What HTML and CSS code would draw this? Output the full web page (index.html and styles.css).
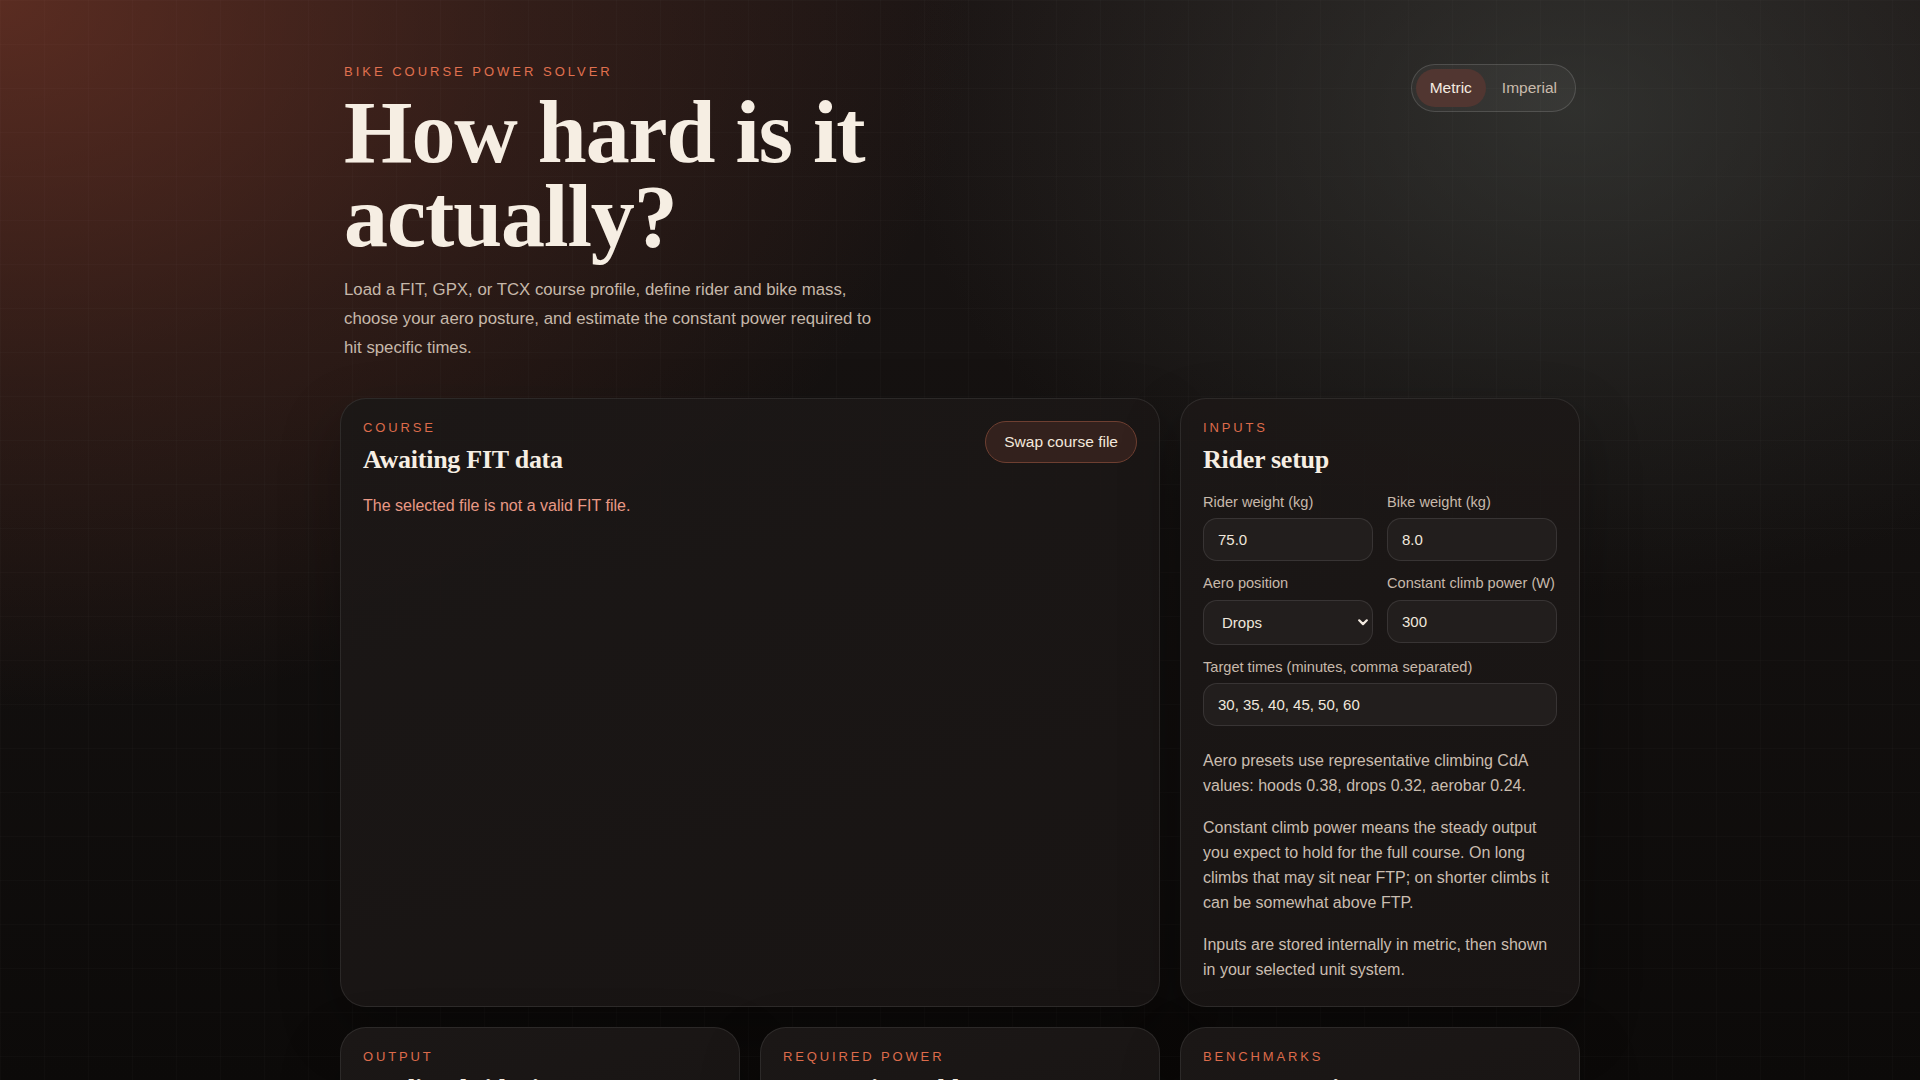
FILE: index.html
```html
<!DOCTYPE html>
<html lang="en">
<head>
<meta charset="utf-8">
<title>Bike Course Power Solver</title>
<link rel="stylesheet" href="styles.css">
</head>
<body>
<main class="page">
  <header class="hero">
    <div class="hero-copy">
      <p class="eyebrow">BIKE COURSE POWER SOLVER</p>
      <h1 class="hero-title">How hard is it actually?</h1>
      <p class="hero-lede">Load a FIT, GPX, or TCX course profile, define rider and bike mass, choose your aero posture, and estimate the constant power required to hit specific times.</p>
    </div>
    <div class="unit-toggle" role="group" aria-label="Units">
      <button class="unit-btn is-active" type="button">Metric</button>
      <button class="unit-btn" type="button">Imperial</button>
    </div>
  </header>

  <section class="grid">
    <article class="card card-course">
      <div class="card-head">
        <div>
          <p class="card-label">COURSE</p>
          <h2 class="card-title">Awaiting FIT data</h2>
        </div>
        <button class="swap-btn" type="button">Swap course file</button>
      </div>
      <p class="error-text">The selected file is not a valid FIT file.</p>
    </article>

    <article class="card card-inputs">
      <p class="card-label">INPUTS</p>
      <h2 class="card-title">Rider setup</h2>
      <div class="field-grid">
        <label class="field">
          <span class="field-label">Rider weight (kg)</span>
          <input class="field-input" type="text" value="75.0">
        </label>
        <label class="field">
          <span class="field-label">Bike weight (kg)</span>
          <input class="field-input" type="text" value="8.0">
        </label>
        <label class="field">
          <span class="field-label">Aero position</span>
          <span class="select-wrap">
            <select class="field-select">
              <option>Hoods</option>
              <option selected>Drops</option>
              <option>Aerobar</option>
            </select>
            <svg class="select-chevron" width="10" height="7" viewBox="0 0 10 7" aria-hidden="true"><path d="M1.2 1.3 5 5.1 8.8 1.3" fill="none" stroke="currentColor" stroke-width="2.2" stroke-linecap="round" stroke-linejoin="round"/></svg>
          </span>
        </label>
        <label class="field">
          <span class="field-label">Constant climb power (W)</span>
          <input class="field-input" type="text" value="300">
        </label>
        <label class="field field-wide">
          <span class="field-label">Target times (minutes, comma separated)</span>
          <input class="field-input" type="text" value="30, 35, 40, 45, 50, 60">
        </label>
      </div>
      <div class="notes">
        <p>Aero presets use representative climbing CdA values: hoods 0.38, drops 0.32, aerobar 0.24.</p>
        <p>Constant climb power means the steady output you expect to hold for the full course. On long climbs that may sit near FTP; on shorter climbs it can be somewhat above FTP.</p>
        <p>Inputs are stored internally in metric, then shown in your selected unit system.</p>
      </div>
    </article>

    <article class="card">
      <p class="card-label">OUTPUT</p>
      <h2 class="card-title">Predicted ride time</h2>
      <p class="card-body">Load a course to estimate how long the ride takes at your constant climb power.</p>
    </article>

    <article class="card">
      <p class="card-label">REQUIRED POWER</p>
      <h2 class="card-title">Target-time table</h2>
      <p class="card-body">Required watts for each target time appear here once a course is loaded.</p>
    </article>

    <article class="card">
      <p class="card-label">BENCHMARKS</p>
      <h2 class="card-title">Pro comparison</h2>
      <p class="card-body">Compare your estimate with reference efforts on the same course.</p>
    </article>
  </section>
</main>
</body>
</html>
```

FILE: styles.css
```css
* {
  box-sizing: border-box;
}

html {
  background: #0c0a09;
}

body {
  margin: 0;
  min-height: 100vh;
  font-family: "Liberation Sans", Arial, sans-serif;
  color: #efe6dc;
  background-color: #0c0a09;
  background-image:
    linear-gradient(rgba(255, 255, 255, 0.015) 1px, transparent 1px),
    linear-gradient(90deg, rgba(255, 255, 255, 0.015) 1px, transparent 1px),
    radial-gradient(ellipse 1300px 950px at 0% 0%, rgba(112, 52, 38, 0.74) 0%, rgba(112, 52, 38, 0.28) 40%, rgba(112, 52, 38, 0) 75%),
    radial-gradient(ellipse 900px 650px at 82% 10%, rgba(70, 76, 72, 0.5) 0%, rgba(70, 76, 72, 0.18) 45%, rgba(70, 76, 72, 0) 75%),
    linear-gradient(180deg, #1b1514 0%, #141110 45%, #0c0a09 100%);
  background-size: 44px 44px, 44px 44px, auto, auto, auto;
  background-attachment: fixed;
}

.page {
  max-width: 1240px;
  margin: 0 auto;
  padding: 64px 0 80px;
}

/* Hero */
.hero {
  display: flex;
  justify-content: space-between;
  align-items: flex-start;
  padding: 0 4px;
  margin-bottom: 35px;
}

.eyebrow {
  margin: 0 0 10px;
  font-size: 13px;
  line-height: 16.9px;
  letter-spacing: 0.23em;
  color: #e0714f;
}

.hero-title {
  margin: 0;
  max-width: 620px;
  font-family: "Liberation Serif", "Times New Roman", serif;
  font-weight: 700;
  font-size: 88px;
  line-height: 84px;
  letter-spacing: -0.012em;
  color: #f6eee3;
}

.hero-lede {
  margin: 17px 0 0;
  max-width: 540px;
  font-size: 16.8px;
  line-height: 28.9px;
  color: #c6b8aa;
}

.unit-toggle {
  display: flex;
  gap: 2px;
  padding: 4px;
  border: 1px solid rgba(255, 255, 255, 0.14);
  border-radius: 999px;
  background: rgba(255, 255, 255, 0.04);
}

.unit-btn {
  height: 38px;
  padding: 0 14px;
  border: 0;
  border-radius: 999px;
  background: transparent;
  font-family: "Liberation Sans", Arial, sans-serif;
  font-size: 15.5px;
  color: #c9bbac;
}

.unit-btn.is-active {
  background: #513631;
  color: #f4ebe0;
}

/* Cards grid */
.grid {
  display: grid;
  grid-template-columns: repeat(3, minmax(0, 1fr));
  gap: 20px;
}

.card {
  padding: 22px;
  border: 1px solid rgba(255, 255, 255, 0.085);
  border-radius: 26px;
  background: linear-gradient(165deg, rgba(28, 24, 23, 0.96), rgba(25, 21, 20, 0.96));
  box-shadow: 0 24px 60px rgba(0, 0, 0, 0.28);
}

.card-course {
  grid-column: span 2;
}

.card-inputs {
  padding-bottom: 24px;
}

.card-head {
  display: flex;
  justify-content: space-between;
  align-items: flex-start;
}

.card-label {
  margin: 0;
  font-size: 13px;
  line-height: 13px;
  letter-spacing: 0.22em;
  color: #dc6b4b;
}

.card-title {
  margin: 12px 0 20px;
  font-family: "Liberation Serif", "Times New Roman", serif;
  font-weight: 700;
  font-size: 26px;
  line-height: 28.6px;
  letter-spacing: -0.01em;
  color: #f6eee3;
}

.card-head .card-title {
  margin-bottom: 0;
}

.card-course .card-head {
  margin-bottom: 20px;
}

.swap-btn {
  height: 42px;
  padding: 0 18px;
  border: 1px solid #6e3f31;
  border-radius: 999px;
  background: #33211d;
  font-family: "Liberation Sans", Arial, sans-serif;
  font-size: 15.5px;
  color: #f3e8dc;
}

.error-text {
  margin: 0;
  font-size: 16px;
  line-height: 24px;
  color: #ea9985;
}

/* Fields */
.field-grid {
  display: grid;
  grid-template-columns: 1fr 1fr;
  gap: 14px;
  align-items: start;
}

.field {
  display: flex;
  flex-direction: column;
  gap: 7px;
  min-width: 0;
}

.field-wide {
  grid-column: span 2;
}

.field-label {
  font-size: 14.6px;
  line-height: 17.25px;
  white-space: nowrap;
  color: #c7b9ab;
}

.field-input,
.field-select {
  width: 100%;
  height: 43px;
  padding: 0 14px;
  border: 1px solid rgba(255, 255, 255, 0.1);
  border-radius: 14px;
  background: #221e1d;
  font-family: "Liberation Sans", Arial, sans-serif;
  font-size: 15px;
  color: #efe6dc;
  outline: none;
}

.select-wrap {
  position: relative;
  display: block;
}

.field-select {
  height: 45px;
  padding-left: 18px;
  appearance: none;
  -webkit-appearance: none;
}

.select-chevron {
  position: absolute;
  right: 5px;
  top: 19px;
  color: #f2e9df;
  pointer-events: none;
}

/* Notes */
.notes {
  margin-top: 22px;
  display: flex;
  flex-direction: column;
  gap: 17px;
}

.notes p {
  margin: 0;
  font-size: 16px;
  line-height: 25px;
  color: #cabdb0;
}

.card-body {
  margin: 0;
  font-size: 16px;
  line-height: 25px;
  color: #cabdb0;
}
```
